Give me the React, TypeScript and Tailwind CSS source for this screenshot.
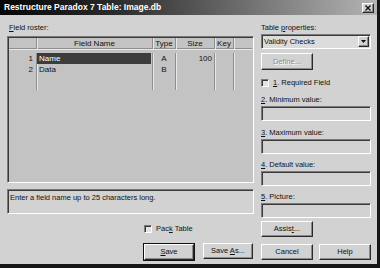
import React from 'react'

const font = { fontFamily: '"Liberation Sans", Arial, sans-serif' }

const raised = 'border border-t-white border-l-white border-r-[#2a2a2a] border-b-[#2a2a2a] shadow-[inset_-1px_-1px_0_#8a8a8a]'
const sunken = 'border border-t-[#7a7a7a] border-l-[#7a7a7a] border-r-white border-b-white shadow-[inset_1px_1px_0_#3a3a3a]'

function Btn({ children, className = '', disabled = false }: { children: React.ReactNode; className?: string; disabled?: boolean }) {
  return (
    <div className={`h-[16px] flex items-center justify-center bg-[#d2d2d2] ${raised} ${className}`}>
      <span className={disabled ? 'text-[#8c8c8c] [text-shadow:1px_1px_0_#fff]' : 'text-[#111]'}>{children}</span>
    </div>
  )
}

function Check({ children }: { children: React.ReactNode }) {
  return (
    <div className="flex items-center gap-[4px] h-[12px]">
      <div className={`w-[8px] h-[8px] bg-[#e4e4e4] ${sunken}`}></div>
      <span>{children}</span>
    </div>
  )
}

function Field({ n, label, className = '' }: { n: string; label: string; className?: string }) {
  return (
    <div className={className}>
      <div className="h-[12px] leading-[12px]"><span className="underline">{n}</span>. {label}</div>
      <div className={`h-[15px] bg-[#d2d2d2] ${sunken}`}></div>
    </div>
  )
}

const cols = 'grid grid-cols-[28px_116px_23px_39px_19px_1fr]'
const cell = 'border-r border-[#8e8e8e] shadow-[1px_0_0_#e8e8e8]'

export default function App() {
  return (
    <div style={font} className="w-[380px] h-[268px] bg-[#d2d2d2] border-r-[3px] border-b-[4px] border-[#161616] flex flex-col text-[7.5px] text-[#111] overflow-hidden">
      {/* title bar */}
      <div className="h-[15px] shrink-0 flex items-center justify-between pl-[4px] pr-[3px] bg-[linear-gradient(to_right,#050505,#2a2a2a_30%,#b4b4b4)]">
        <span className="text-white font-bold text-[8.5px]">Restructure Paradox 7 Table: Image.db</span>
        <div className={`w-[12px] h-[10px] bg-[#d2d2d2] flex items-center justify-center ${raised}`}>
          <svg width="6" height="6" viewBox="0 0 6 6"><path d="M0.5 0.5L5.5 5.5M5.5 0.5L0.5 5.5" stroke="#111" strokeWidth="1.4" /></svg>
        </div>
      </div>

      <div className="flex flex-1 pt-[7px] pl-[7px] gap-[7px]">
        {/* left column */}
        <div className="w-[247px] flex flex-col">
          <div className="h-[12px] leading-[12px] pl-[2px]"><span className="underline">F</span>ield roster:</div>
          <div className={`mt-[2px] h-[147px] bg-[#c3c3c3] ${sunken} p-[1px]`}>
            <div className={`${cols} h-[11px] items-stretch border-b border-[#8e8e8e] shadow-[0_1px_0_#e8e8e8]`}>
              <div className={cell}></div>
              <div className={`${cell} text-center leading-[11px] text-[8px]`}>Field Name</div>
              <div className={`${cell} text-center leading-[11px] text-[8px]`}>Type</div>
              <div className={`${cell} text-center leading-[11px] text-[8px]`}>Size</div>
              <div className={`${cell} text-center leading-[11px] text-[8px]`}>Key</div>
              <div></div>
            </div>
            <div className={`${cols} h-[41px] pt-[4px] text-[8px]`}>
              <div className={`${cell} text-right pr-[3px] leading-[11px]`}>1<br />2</div>
              <div className={`${cell} leading-[11px] pr-[1px]`}>
                <div className="bg-[#3c3c3c] text-white pl-[2px] h-[11px]">Name</div>
                <div className="pl-[2px]">Data</div>
              </div>
              <div className={`${cell} text-center leading-[11px]`}>A<br />B</div>
              <div className={`${cell} text-right pr-[2px] leading-[11px]`}>100</div>
              <div className={cell}></div>
              <div></div>
            </div>
          </div>
          <div className={`mt-[6px] h-[25px] bg-[#d2d2d2] ${sunken} px-[2px] pt-[2px]`}>
            Enter a field name up to 25 characters long.
          </div>
          <div className="mt-[9px] pl-[137px]">
            <Check>Pac<span className="underline">k</span> Table</Check>
          </div>
          <div className="mt-[8px] flex pl-[136px] gap-[8px]">
            <div className="border border-[#111]">
              <Btn className="w-[50px] h-[14px]"><span className="underline">S</span>ave</Btn>
            </div>
            <Btn className="w-[50px]">Save <span className="underline">A</span>s...</Btn>
          </div>
        </div>

        {/* right column */}
        <div className="w-[110px] flex flex-col">
          <div className="h-[12px] leading-[12px]">Table <span className="underline">p</span>roperties:</div>
          <div className={`h-[15px] bg-[#dcdcdc] ${sunken} flex items-center justify-between pl-[2px] pr-[1px]`}>
            <span>Validity Checks</span>
            <div className={`w-[11px] h-[11px] bg-[#d2d2d2] flex items-center justify-center ${raised}`}>
              <svg width="5" height="3" viewBox="0 0 5 3"><path d="M0 0H5L2.5 3Z" fill="#111" /></svg>
            </div>
          </div>
          <Btn className="mt-[4px] w-[52px] h-[17px]" disabled>Define...</Btn>
          <div className="mt-[7px]">
            <Check><span className="underline">1</span>. Required Field</Check>
          </div>
          <Field n="2" label="Minimum value:" className="mt-[5px]" />
          <Field n="3" label="Maximum value:" className="mt-[6px]" />
          <Field n="4" label="Default value:" className="mt-[5px]" />
          <Field n="5" label="Picture:" className="mt-[5px]" />
          <Btn className="mt-[3px] w-[52px]">Assis<span className="underline">t</span>...</Btn>
          <div className="mt-[7px] flex gap-[6px]">
            <Btn className="w-[52px]">Cancel</Btn>
            <Btn className="w-[52px]">Help</Btn>
          </div>
        </div>
      </div>
    </div>
  )
}
